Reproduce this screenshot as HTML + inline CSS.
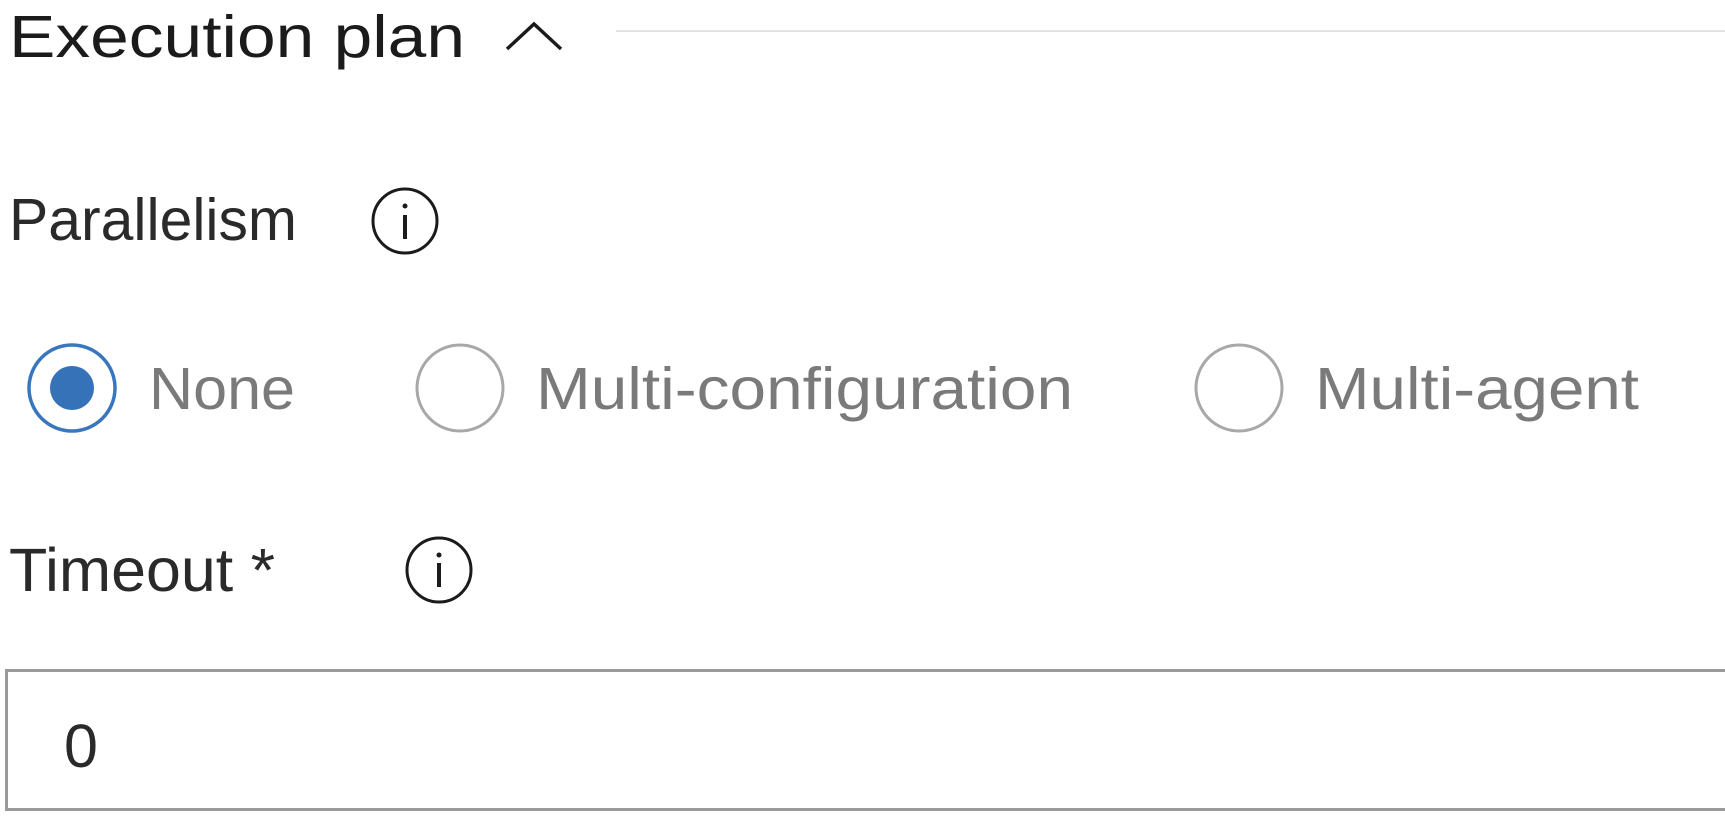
<!DOCTYPE html>
<html><head><style>html,body{margin:0;padding:0;background:#fff;width:1725px;height:817px;overflow:hidden}</style></head>
<body>
<svg width="1725" height="817" viewBox="0 0 1725 817" xmlns="http://www.w3.org/2000/svg" font-family="Liberation Sans, sans-serif">
<rect width="1725" height="817" fill="#fff"/>
<text x="9" y="57" font-size="59" fill="#1b1b1b" textLength="456" lengthAdjust="spacingAndGlyphs">Execution plan</text>
<path d="M507 49 L534 24 L561 49" fill="none" stroke="#1b1b1b" stroke-width="3.5"/>
<line x1="616" y1="31" x2="1725" y2="31" stroke="#e2e2e2" stroke-width="2"/>
<text x="9" y="240" font-size="59" fill="#2a2a2a" textLength="288" lengthAdjust="spacingAndGlyphs">Parallelism</text>
<circle cx="405" cy="221" r="32" fill="none" stroke="#1b1b1b" stroke-width="3"/>
<rect x="403" y="215" width="4" height="24" fill="#1b1b1b"/><circle cx="405" cy="206" r="2.5" fill="#1b1b1b"/>
<circle cx="72" cy="388" r="43" fill="none" stroke="#3a76bd" stroke-width="3.5"/>
<circle cx="72" cy="388" r="22" fill="#3572b8"/>
<text x="149" y="409" font-size="59" fill="#7a7a7a" textLength="146" lengthAdjust="spacingAndGlyphs">None</text>
<circle cx="460" cy="388" r="43" fill="none" stroke="#a8a8a8" stroke-width="3"/>
<text x="536" y="409" font-size="59" fill="#7a7a7a" textLength="537" lengthAdjust="spacingAndGlyphs">Multi-configuration</text>
<circle cx="1239" cy="388" r="43" fill="none" stroke="#a8a8a8" stroke-width="3"/>
<text x="1315" y="409" font-size="59" fill="#7a7a7a" textLength="324" lengthAdjust="spacingAndGlyphs">Multi-agent</text>
<text x="9" y="591" font-size="61" fill="#2a2a2a" textLength="266" lengthAdjust="spacingAndGlyphs">Timeout *</text>
<circle cx="439" cy="570" r="32" fill="none" stroke="#1b1b1b" stroke-width="3"/>
<rect x="437" y="563" width="4" height="24" fill="#1b1b1b"/><circle cx="439" cy="555" r="2.5" fill="#1b1b1b"/>
<rect x="6.5" y="670.5" width="1730" height="139" fill="#fff" stroke="#9a9a9a" stroke-width="3"/>
<text x="64" y="767" font-size="61" fill="#2a2a2a">0</text>
</svg>
</body></html>
